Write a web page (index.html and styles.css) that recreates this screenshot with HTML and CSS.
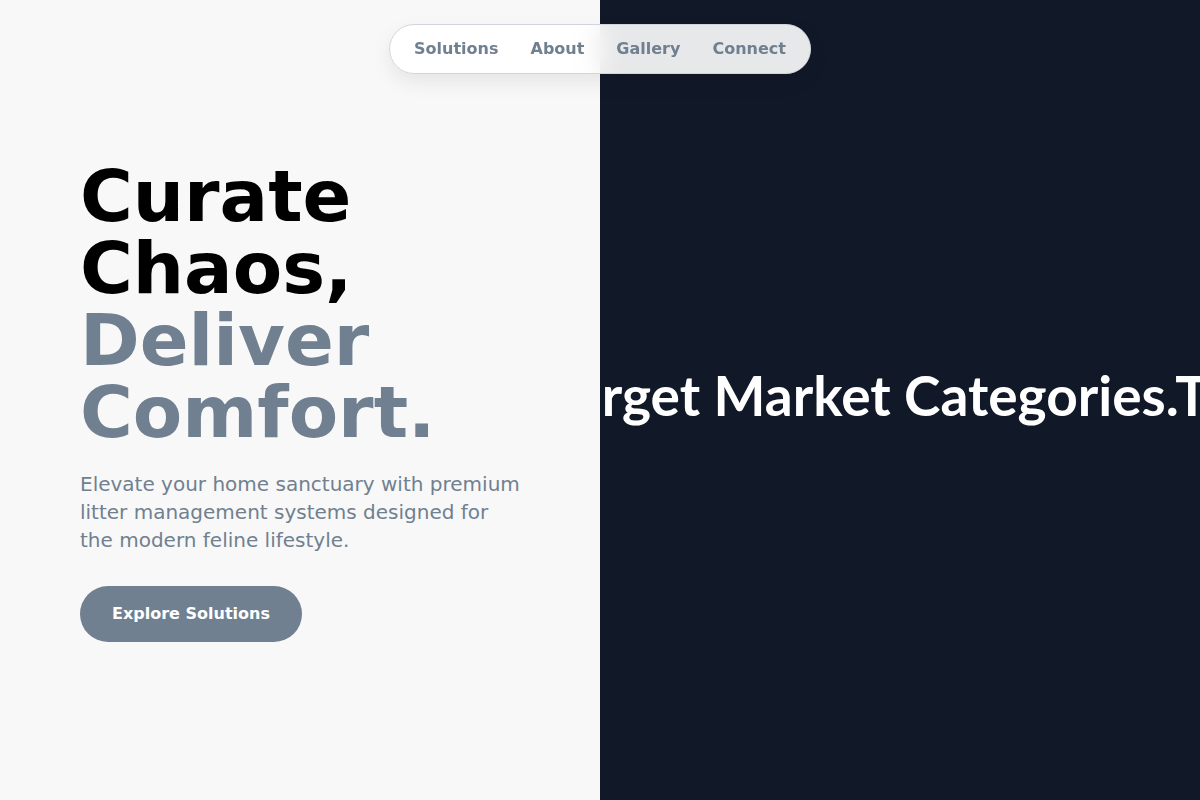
FILE: index.html
```html
<!DOCTYPE html>
<html lang="en">
<head>
<meta charset="utf-8">
<title>Curate Chaos</title>
<link rel="stylesheet" href="styles.css">
</head>
<body>
<nav class="nav">
  <a class="nav-link" href="#">Solutions</a>
  <a class="nav-link" href="#">About</a>
  <a class="nav-link" href="#">Gallery</a>
  <a class="nav-link" href="#">Connect</a>
</nav>
<main class="split">
  <section class="hero">
    <div class="hero-inner">
      <h1 class="title">Curate Chaos, <span class="accent">Deliver Comfort.</span></h1>
      <p class="lead">Elevate your home sanctuary with premium litter management systems designed for the modern feline lifestyle.</p>
      <a class="cta" href="#">Explore Solutions</a>
    </div>
  </section>
  <section class="showcase">
    <div class="marquee">
      <span class="marquee-text">Target Market Categories.Target Market Categories.</span>
    </div>
  </section>
</main>
</body>
</html>
```
FILE: styles.css
```css
* { box-sizing: border-box; }
html, body { margin: 0; padding: 0; height: 100%; }
body {
  font-family: "DejaVu Sans", sans-serif;
  overflow: hidden;
}
.split {
  display: grid;
  grid-template-columns: 600px 600px;
  height: 800px;
}
.hero {
  background: #f8f8f8;
  display: flex;
  align-items: center;
  padding: 0 80px;
}
.hero-inner {
  width: 450px;
  margin-top: 2px;
}
.title {
  margin: 0;
  font-size: 72px;
  line-height: 72px;
  font-weight: 700;
  color: #000;
}
.accent { color: #708090; }
.lead {
  margin: 22px 0 0;
  font-size: 20px;
  line-height: 28px;
  color: #708090;
  width: 445px;
}
.cta {
  display: inline-block;
  margin-top: 32px;
  padding: 18px 32px;
  border-radius: 28px;
  background: #708090;
  color: #fff;
  font-weight: 700;
  font-size: 16px;
  line-height: 20px;
  text-decoration: none;
}
.showcase {
  background: #111827;
  display: flex;
  align-items: center;
  overflow: hidden;
}
.marquee {
  white-space: nowrap;
  margin-left: -53px;
  margin-top: -11px;
}
.marquee-text {
  font-family: Lato, "Open Sans", sans-serif;
  font-weight: 700;
  font-size: 55px;
  color: #fff;
}
.nav {
  position: fixed;
  top: 24px;
  left: 50%;
  transform: translateX(-50%);
  display: flex;
  padding: 6px 8px 7px;
  border: 1px solid #d1d5db;
  border-radius: 999px;
  background: rgba(255, 255, 255, 0.9);
  backdrop-filter: blur(12px);
  box-shadow: 0 8px 20px rgba(0, 0, 0, 0.08);
  z-index: 10;
}
.nav-link {
  padding: 8px 16px;
  font-size: 16px;
  font-weight: 700;
  color: #708090;
  text-decoration: none;
}
```
